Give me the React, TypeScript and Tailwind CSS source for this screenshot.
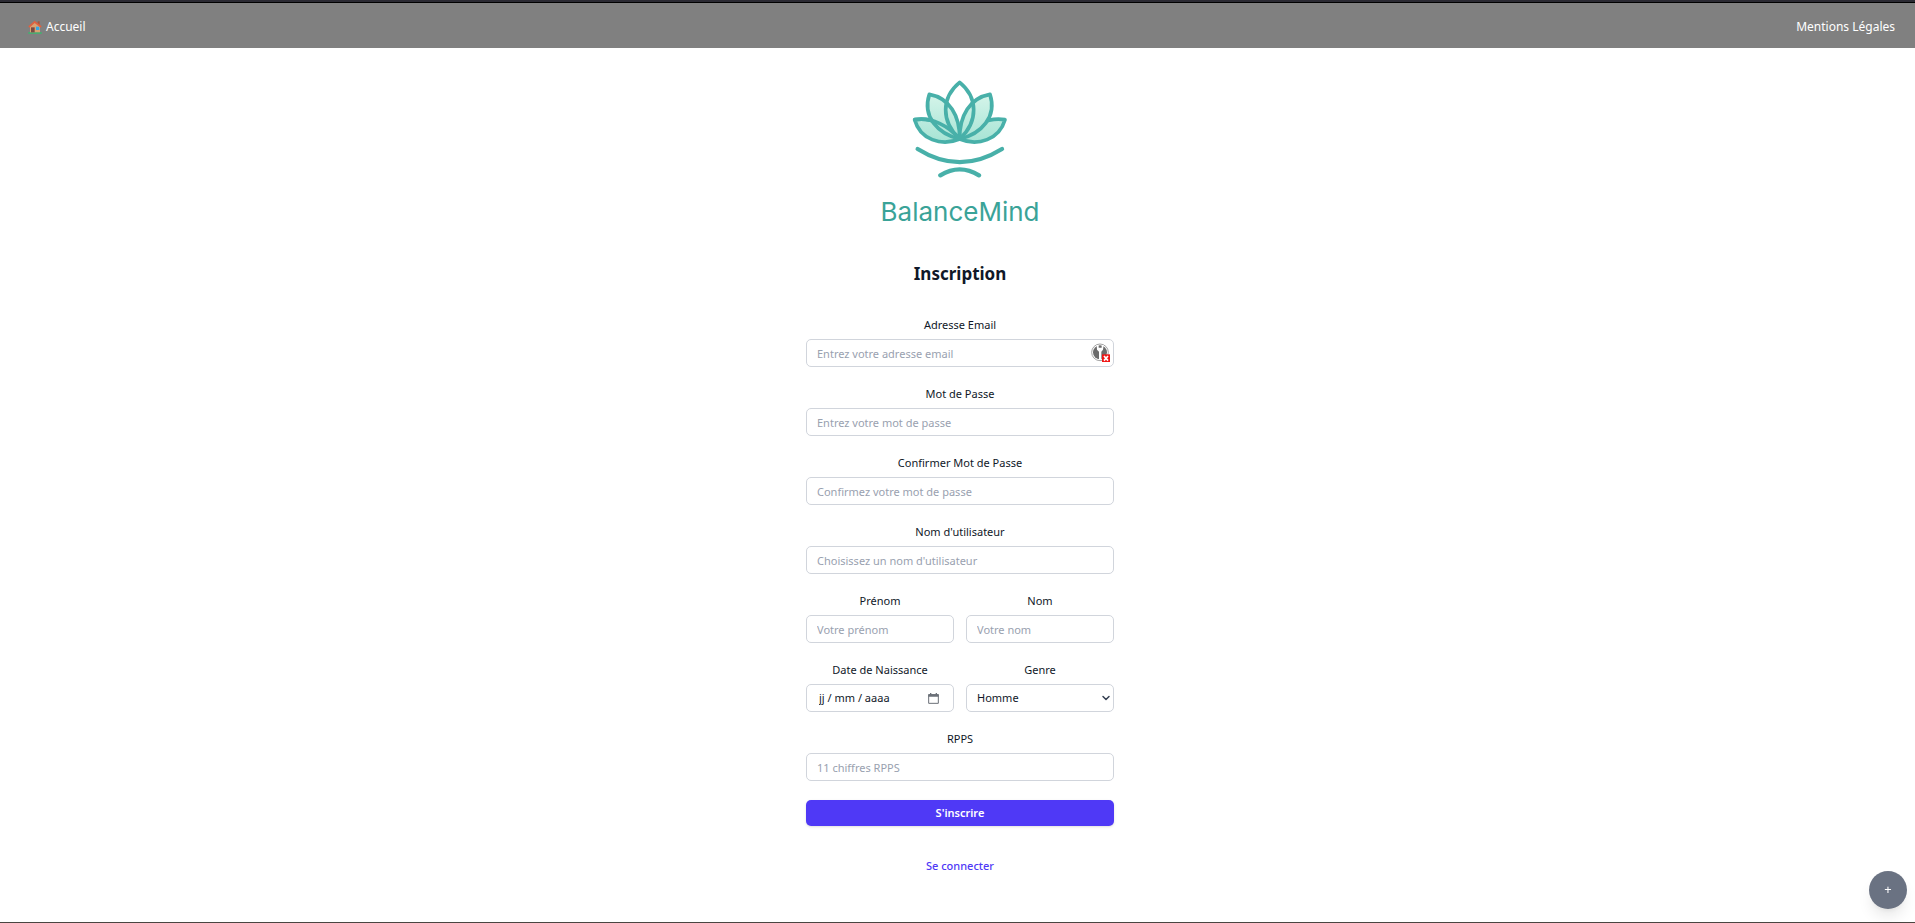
import React from "react";
import { ChevronDown } from "lucide-react";

const inputClass =
  "block h-7 w-full rounded-[5px] border border-gray-300 bg-white px-2.5 text-[11px] leading-4 text-gray-900 placeholder:text-gray-400 focus:outline-2 focus:outline-indigo-600";

function Field({ id, label, children }: { id: string; label: string; children: React.ReactNode }) {
  return (
    <div className="flex min-w-0 flex-1 flex-col gap-1.5">
      <label htmlFor={id} className="text-center text-[11px] leading-4 text-gray-900">
        {label}
      </label>
      {children}
    </div>
  );
}

function House() {
  return (
    <svg viewBox="0 0 42 42" className="size-3.5" aria-hidden="true">
      <path d="M1 37h40v4H1z" fill="#2fbf6b" />
      <path d="M29 4h6v12h-6z" fill="#a8563c" />
      <path d="M6 19 21 7l15 12v18H6z" fill="#d9a273" />
      <path d="M9 22h11v15H9z" fill="#7a4a44" />
      <path d="M24 20h10v10H24z" fill="#35a7e6" />
      <path d="M1 19 20 2l21 17-3 4L20 9 4 23z" fill="#e0603f" />
    </svg>
  );
}

function Lotus() {
  return (
    <svg viewBox="150 54 300 300" className="size-[100px]" fill="none" aria-hidden="true">
      <defs>
        <linearGradient id="petal" x1="0" y1="100" x2="0" y2="250" gradientUnits="userSpaceOnUse">
          <stop offset="0" stopColor="#d6f5ea" />
          <stop offset="1" stopColor="#a5e3d4" />
        </linearGradient>
      </defs>
      <g stroke="#48b0a9" strokeWidth="11" strokeLinejoin="round" strokeLinecap="round">
        <g fill="url(#petal)">
          <path d="M164 179C215 170 266 198 299 237C244 260 180 238 164 179Z" />
          <path d="M435 179C384 170 332 198 299 237C354 260 418 238 435 179Z" />
          <path d="M208 103C268 114 300 166 299 237C234 222 186 170 208 103Z" />
          <path d="M390 103C330 114 298 166 299 237C364 222 412 170 390 103Z" />
        </g>
        <path d="M164 179C215 170 266 198 299 237" />
        <path d="M299 67C244 112 242 184 299 237C356 184 354 112 299 67Z" />
        <path d="M173 267Q299 346 426 267" strokeWidth="13" />
        <path d="M241 346Q299 310 357 346" strokeWidth="13" />
      </g>
    </svg>
  );
}

function KeyBadge() {
  return (
    <svg viewBox="0 0 57 57" className="size-[19px]" aria-hidden="true">
      <circle cx="27" cy="28" r="25" fill="#fff" stroke="#a3a3a3" strokeWidth="3" />
      <circle cx="27" cy="28" r="21" fill="#6b6b6b" />
      <path d="M17 6h6v8h9V6h6l-2 14-5 6v24h-7V26l-6-6z" fill="#fff" />
      <path d="M33 34h24v23H33z" fill="#f01414" />
      <path d="m39 39 12 14m0-14L39 53" stroke="#fff" strokeWidth="5" />
    </svg>
  );
}

function CalendarIcon() {
  return (
    <svg viewBox="0 0 33 33" className="size-[11px]" fill="none" aria-hidden="true">
      <path d="M2 5h29v26H2z" stroke="#6b7078" strokeWidth="3" />
      <path d="M1 4h31v7H1zM6 0h4v5H6zM23 0h4v5h-4z" fill="#6b7078" />
    </svg>
  );
}

export default function App() {
  return (
    <div className="flex min-h-screen flex-col border-b border-[#4a4541] bg-white font-['Noto_Sans','Segoe_UI',sans-serif] text-gray-900">
      <header>
        <div className="h-[3px] border-b border-black bg-[#2b2a33]" />
        <nav className="flex h-[45px] items-center justify-between bg-[#808080] pt-0.5 pr-5 pl-7 text-[12px] text-white">
          <a href="#accueil" className="flex items-center gap-1">
            <House />
            Accueil
          </a>
          <a href="#mentions-legales">Mentions Légales</a>
        </nav>
      </header>

      <main className="flex flex-col items-center pt-[30px] pl-[5px]">
        <div className="flex flex-col items-center gap-4">
          <Lotus />
          <p className="font-['Inter',sans-serif] text-[26px] leading-9 text-[#3aa398]">BalanceMind</p>
        </div>
        <h1 className="mt-[30px] text-center text-[17px] leading-7 font-bold">Inscription</h1>

        <form className="mt-[29px] flex w-full max-w-[308px] flex-col gap-[19px]" onSubmit={(e) => e.preventDefault()}>
          <Field id="email" label="Adresse Email">
            <div className="relative">
              <input id="email" type="email" placeholder="Entrez votre adresse email" className={inputClass} />
              <span className="absolute top-1 right-1">
                <KeyBadge />
              </span>
            </div>
          </Field>
          <Field id="password" label="Mot de Passe">
            <input id="password" type="password" placeholder="Entrez votre mot de passe" className={inputClass} />
          </Field>
          <Field id="confirm" label="Confirmer Mot de Passe">
            <input id="confirm" type="password" placeholder="Confirmez votre mot de passe" className={inputClass} />
          </Field>
          <Field id="username" label="Nom d'utilisateur">
            <input id="username" type="text" placeholder="Choisissez un nom d'utilisateur" className={inputClass} />
          </Field>
          <div className="flex gap-3">
            <Field id="firstname" label="Prénom">
              <input id="firstname" type="text" placeholder="Votre prénom" className={inputClass} />
            </Field>
            <Field id="lastname" label="Nom">
              <input id="lastname" type="text" placeholder="Votre nom" className={inputClass} />
            </Field>
          </div>
          <div className="flex gap-3">
            <Field id="birthdate" label="Date de Naissance">
              <div className="flex h-7 items-center rounded-[5px] border border-gray-300 pr-3.5 pl-3">
                <input
                  id="birthdate"
                  type="text"
                  placeholder="jj / mm / aaaa"
                  className="w-full min-w-0 flex-1 text-[11px] leading-4 outline-none placeholder:text-gray-900"
                />
                <button type="button" aria-label="Calendrier">
                  <CalendarIcon />
                </button>
              </div>
            </Field>
            <Field id="gender" label="Genre">
              <div className="relative">
                <select
                  id="gender"
                  className="block h-7 w-full appearance-none rounded-[5px] border border-gray-300 bg-white px-2.5 text-[11px] leading-4"
                >
                  <option>Homme</option>
                  <option>Femme</option>
                </select>
                <ChevronDown
                  className="pointer-events-none absolute top-2 right-0.5 size-3 text-gray-700"
                  strokeWidth={3}
                  aria-hidden="true"
                />
              </div>
            </Field>
          </div>
          <Field id="rpps" label="RPPS">
            <input id="rpps" type="text" placeholder="11 chiffres RPPS" className={inputClass} />
          </Field>
          <button
            type="submit"
            className="h-[26px] rounded-[5px] bg-[#4f39f6] text-[11px] leading-4 font-semibold text-white shadow-sm"
          >
            S'inscrire
          </button>
        </form>

        <a href="#connexion" className="mt-8 text-[11px] leading-4 font-medium text-[#4f39f6]">
          Se connecter
        </a>
      </main>

      <button
        type="button"
        aria-label="Ajouter"
        className="fixed right-2 bottom-3.5 size-[38px] rounded-full bg-[#6a7282] text-[13px] text-white shadow-lg"
      >
        +
      </button>
    </div>
  );
}
